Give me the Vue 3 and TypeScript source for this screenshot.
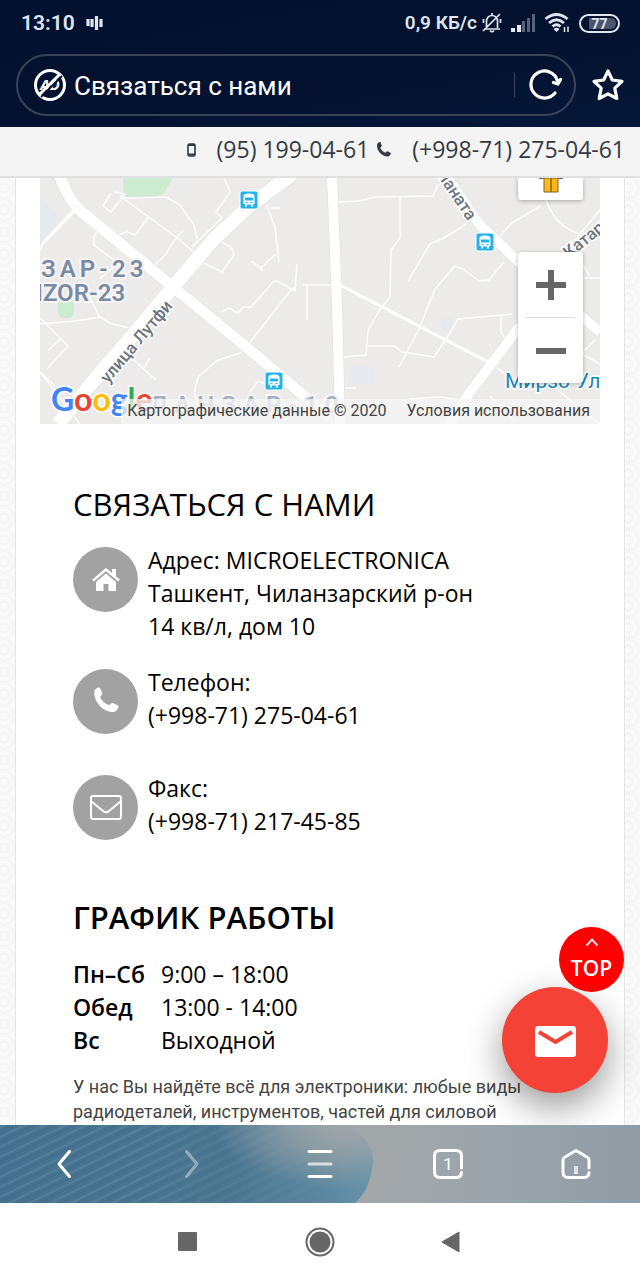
<script setup lang="ts">
import { ref } from 'vue'

interface Stop { x: number; y: number }
interface Hours { day: string; time: string }
interface Contact { icon: 'home' | 'phone' | 'mail'; lines: string[] }

const address = ref('Связаться с нами')

const stops: Stop[] = [
  { x: 240, y: 191 },
  { x: 476, y: 233 },
  { x: 265, y: 372 },
]

const contacts: Contact[] = [
  { icon: 'home', lines: ['Адрес: MICROELECTRONICA', 'Ташкент, Чиланзарский р-он', '14 кв/л, дом 10'] },
  { icon: 'phone', lines: ['Телефон:', '(+998-71) 275-04-61'] },
  { icon: 'mail', lines: ['Факс:', '(+998-71) 217-45-85'] },
]

const hours: Hours[] = [
  { day: 'Пн–Сб', time: '9:00 – 18:00' },
  { day: 'Обед', time: '13:00 - 14:00' },
  { day: 'Вс', time: 'Выходной' },
]

const lanes: string[] = [
  'M75 208 L43 243 L40 250',
  'M111 193 l-8 13 8 6 14-18 -11-2 M120 196 l60 44 20 18 M78 208',
  'M124 198 l42-1 14 8 14 20 3 14 M148 218 l-13 17 -8 -3 -15 5 -14-8 -4 8 0 8 24 18 -18 16 M183 231 l-10 11 -7 12 -19 18',
  'M192 247 l30-29 -6-6 14-20 -6-14 M202 262 l20 10 12-17 -2-7 -12-7',
  'M267 206 l8 21 4 35 M270 208 l10 0 M276 254 l-15 14 -10-7 M258 266 l5 5',
  'M222 312 l7-4 9 5 5-6 8 0 22-25 4-1 18 10 2-27 M296 286 l-6 5 -42 54 -8 8 -24 8 -18 16 -4 16 4 14',
  'M40 324 l35-3 25-4 10 6 30 8 M86 290 l14 28 M40 318 l28 28 -20 22 M48 350 l14-12',
  'M126 353 l30 27 M150 358 l-6 10 M40 372 l40 52 M40 372 l15 14 M250 392 l8-11 20 8',
  'M303 285 l37 0 M307 286 l0 34',
  'M338 202 l20-1 18-4 57-1 5-12 M400 197 l0 41 -9 12 -1 47 -10 12 -12 22 -2 24 -24 2 M367 346 l27 0 8 6 32 5 16-24 8-14 54-5',
  'M408 281 l22-37 12-5 20-12 4-4 M399 367 l20-38 16-40 20-23 8 3 16 12 10-1 15-18 M498 238 l14-15 28-17',
  'M501 314 l0 18 6 10 M545 196 q8 30 35 38 M600 210 l-30 36 20 30 M583 278 l17 0 M490 362 l30 24 M490 396 l25 25 M595 340 l-30 30 M340 388 l16 0',
  'M520 360 l80 64 M575 350 l25 14 M410 399 l30-2 26 4',
]
</script>

<template>
  <div class="phone">
    <header class="chrome">
      <div class="status">
        <span class="clock">13:10</span>
        <svg class="voice" width="18" height="16" viewBox="0 0 18 16" aria-hidden="true">
          <path d="M2 4v7M6 4v8M10.500 1v14M15 4v8" stroke="#dfe5f2" stroke-width="3.200" fill="none" />
        </svg>
        <span class="rate">0,9 КБ/с</span>
        <svg class="bell" width="22" height="22" viewBox="0 0 22 22" fill="none" stroke="#dfe5f2" stroke-width="1.700" aria-hidden="true">
          <path d="M3 17h16M5.500 16V9a5.500 5.500 0 0 1 11 0v7M9 18.500q2 2.500 4 0M11 1v3M2 19 19 2M2.500 7v4M19.500 7v4" />
        </svg>
        <svg class="signal" width="25" height="18" viewBox="0 0 25 18" aria-hidden="true">
          <path d="M0 14h4v4H0zM6 11h4v7H6z" fill="#e7ebf5" />
          <path d="M11 7h3v11h-3zM16 4h3v14h-3zM21 0h3v18h-3z" fill="#58627a" />
        </svg>
        <svg class="wifi" width="27" height="22" viewBox="0 0 27 22" fill="none" stroke="#dfe5f2" stroke-width="2.800" aria-hidden="true">
          <path d="M1.500 7q11-9 22 0M5 11q7.500-6.500 15 0M8.500 14.500q4-3.500 8 0" />
          <path d="m12.500 20-3-3q3-2.500 6 0z" fill="#dfe5f2" stroke="none" />
          <path d="M20.500 20v-5M24 14.500V20" stroke-width="1.500" />
        </svg>
        <span class="battery"><span class="charge">77</span></span>
      </div>
      <div class="toolbar">
        <div class="omnibox">
          <svg width="34" height="34" viewBox="0 0 34 34" aria-hidden="true">
            <circle cx="17" cy="17" r="14.500" fill="none" stroke="#fff" stroke-width="3" />
            <text x="17" y="22" text-anchor="middle" class="ad">AD</text>
            <path d="M8 29 29 8" stroke="#04122f" stroke-width="2" />
            <path d="M6 27 27 6" stroke="#fff" stroke-width="3" />
          </svg>
          <input v-model="address" class="address" type="text" aria-label="Адрес страницы">
          <button class="icon-btn reload" type="button" aria-label="Обновить">
            <svg width="36" height="36" viewBox="0 0 36 36" fill="none" stroke="#fff" stroke-width="3.200" stroke-linecap="round" stroke-linejoin="round">
              <path d="M29 26A13.500 13.500 0 1 1 31.500 14M27.500 15.500l4.500 1.500L34.500 12.500" />
            </svg>
          </button>
        </div>
        <button class="icon-btn" type="button" aria-label="В закладки">
          <svg width="34" height="34" viewBox="0 0 34 34" fill="none" stroke="#fff" stroke-width="3.200" stroke-linejoin="round">
            <path d="m17 3 4.300 9 9.700 1.300-7.200 6.900L25.800 30.500 17 25.800 8.200 30.500l2-10.300L3 13.300 12.700 12z" />
          </svg>
        </button>
      </div>
    </header>

    <div class="phones">
      <svg width="9" height="14" viewBox="0 0 9 14" aria-hidden="true">
        <rect x="1" y="1" width="7" height="12" rx="1.500" fill="none" stroke="#333a44" stroke-width="1.600" />
        <path d="M1 2h7M1 11.500h7" stroke="#333a44" stroke-width="2" />
      </svg>
      <a class="mobile" href="tel:951990461">(95) 199-04-61</a>
      <svg width="15" height="15" viewBox="0 0 26 26" aria-hidden="true">
        <path d="M2 4C3 1 7-1 8 1l2 5c.5 2-2 2.500-2.500 4.500C9 14 12 17 16 18.500c2-.5 2-3 4-2.500l5 2.500c2 1-.5 5.500-4 6.500C11 26 0 15 2 4z" fill="#333a44" />
      </svg>
      <a class="office" href="tel:+998712750461">(+998-71) 275-04-61</a>
    </div>

    <main class="site">
      <div class="sheet">
        <section class="map" aria-label="Карта">
          <svg class="tiles" viewBox="40 178 560 246" preserveAspectRatio="xMidYMid slice">
            <rect x="40" y="178" width="560" height="246" fill="#ecebe9" />
            <path d="M123 178h50l-9 15-8 4-32 0z" fill="#cdebd0" />
            <rect x="58" y="298" width="16" height="20" rx="6" fill="#cdebd0" />
            <path d="M40 196l20 22-20 28zM350 367h24v17h-24zM440 320l10-4 4 8-10 8z" fill="#e6e9ed" />
            <g fill="none" stroke="#fdfdfd" stroke-width="1.500" stroke-linejoin="round">
              <path v-for="lane in lanes" :key="lane" :d="lane" />
            </g>
            <g fill="none" stroke="#dededd">
              <path d="M292 174 248 207 213 240 173 287 133 335 100 373 58 424" stroke-width="15" />
              <path d="M59 174 Q68 200 82 212 L173 287 250 350 330 418" stroke-width="12" />
              <path d="M332 176 337 303 340 426M442 170 480 225 520 263 600 332M520 326 470 392 448 426" stroke-width="11" />
            </g>
            <g fill="none" stroke="#fff">
              <path d="M292 174 248 207 213 240 173 287 133 335 100 373 58 424" stroke-width="14" />
              <path d="M59 174 Q68 200 82 212 L173 287 250 350 330 418" stroke-width="11" />
              <path d="M332 176 337 303 340 426M442 170 480 225 520 263 600 332M520 326 470 392 448 426" stroke-width="10" />
              <path d="M340 285 488 362M77 208 43 243" stroke-width="3" />
            </g>
            <g class="district">
              <text x="41" y="277" class="spaced">ЗАР-23</text>
              <text x="36" y="301">IZOR-23</text>
              <text x="150" y="413" class="faded">ЛАНЗАР-10</text>
            </g>
            <g class="street">
              <text transform="translate(108 384) rotate(-50)">улица Лутфи</text>
              <text transform="translate(432 168) rotate(56)">апаната</text>
              <text transform="translate(569 259) rotate(-39)">Катартал</text>
            </g>
            <text x="505" y="388" class="metro">Мирзо-Улуг</text>
            <g v-for="stop in stops" :key="stop.x" :transform="`translate(${stop.x} ${stop.y})`">
              <rect width="18" height="18" rx="2" fill="#25b3ea" stroke="#fff" stroke-width="1" />
              <path d="M3.500 13V5q0-2.500 5.500-2.500T14.500 5v8H13v2.500h-2V13.500H7v2H5V13z" fill="#fff" />
              <path d="M5 6.500h8v3H5zM5.500 11h2v1.300h-2zM10.500 11h2v1.300h-2z" fill="#25b3ea" />
            </g>
            <text x="51" y="411" class="google"><tspan fill="#4285f4">G</tspan><tspan fill="#ea4335">o</tspan><tspan fill="#fbbc05">o</tspan><tspan fill="#4285f4">g</tspan><tspan fill="#34a853">l</tspan><tspan fill="#ea4335">e</tspan></text>
          </svg>
          <div class="map-controls">
            <button class="pegman" type="button" aria-label="Просмотр улиц">
              <svg width="26" height="16" viewBox="0 0 26 16">
                <path d="M1 0h5M20 0h5" stroke="#666" stroke-width="2" />
                <path d="M6 0h14v14H6z" fill="#fbb917" stroke="#81652a" />
                <path d="M13 0v14" stroke="#81652a" stroke-width="1.500" />
              </svg>
            </button>
            <div class="zoom">
              <button type="button" aria-label="Увеличить">
                <svg width="30" height="30" viewBox="0 0 30 30"><path d="M15 0v30M0 15h30" stroke="#666" stroke-width="6" /></svg>
              </button>
              <hr>
              <button type="button" aria-label="Уменьшить">
                <svg width="30" height="30" viewBox="0 0 30 30"><path d="M0 15h30" stroke="#666" stroke-width="6" /></svg>
              </button>
            </div>
          </div>
          <div class="attribution">
            <span>Картографические данные © 2020</span>
            <a href="#terms">Условия использования</a>
          </div>
        </section>

        <section class="info">
          <h2>СВЯЗАТЬСЯ С НАМИ</h2>
          <ul class="contacts">
            <li v-for="contact in contacts" :key="contact.icon">
              <span class="badge">
                <svg v-if="contact.icon === 'home'" width="28" height="24" viewBox="0 0 28 24" fill="#fff" aria-hidden="true">
                  <path d="M14 5.500 4 14V23h7.500v-7h5v7H24v-9z" />
                  <path d="M1 12.500 14 1.500l13 11" fill="none" stroke="#fff" stroke-width="2.400" />
                  <path d="M20 1h4v8l-4-3.500z" />
                </svg>
                <svg v-else-if="contact.icon === 'phone'" width="26" height="30" viewBox="0 0 26 30" aria-hidden="true">
                  <path d="M1.500 4C2.500 1 6-.500 7 1l2.300 5c.500 2-2.300 2.500-2 4.500C9 14 12 16.500 15.500 18c2 0 2.500-2.500 4.500-2l5 2.500c1.500 1.500-1 5.500-4 6.500C11 26 0 15 1.500 4z" fill="#fff" />
                </svg>
                <svg v-else width="32" height="25" viewBox="0 0 32 25" fill="none" stroke="#fff" stroke-width="2" aria-hidden="true">
                  <rect x="1" y="1" width="30" height="23" rx="2" />
                  <path d="M1.500 6.500 13 16q3 2.500 6 0L30.500 6.500" />
                </svg>
              </span>
              <p><span v-for="line in contact.lines" :key="line">{{ line }}</span></p>
            </li>
          </ul>

          <h2 class="strong">ГРАФИК РАБОТЫ</h2>
          <table class="hours">
            <tbody>
              <tr v-for="row in hours" :key="row.day">
                <th scope="row">{{ row.day }}</th>
                <td>{{ row.time }}</td>
              </tr>
            </tbody>
          </table>
          <p class="about">У нас Вы найдёте всё для электроники: любые виды радиодеталей, инструментов, частей для силовой</p>
        </section>
      </div>

      <button class="write" type="button" aria-label="Написать нам">
        <svg width="41" height="31" viewBox="0 0 41 31">
          <rect width="41" height="31" rx="3" fill="#fff" />
          <path d="m4 6 16.500 10L37 6" fill="none" stroke="#f44336" stroke-width="4" />
        </svg>
      </button>
      <a class="top" href="#top">
        <svg width="14" height="9" viewBox="0 0 14 9" fill="none" stroke="#ffdede" stroke-width="2"><path d="m1.500 7.500 5.500-6 5.500 6" /></svg>
        TOP
      </a>
    </main>

    <nav class="browser-bar" aria-label="Браузер">
      <svg class="scene" viewBox="0 0 640 78" preserveAspectRatio="none" aria-hidden="true">
        <defs>
          <linearGradient id="sea" x1="0" y1="0" x2="1" y2="0">
            <stop offset="0" stop-color="#467291" />
            <stop offset=".6" stop-color="#4c7690" />
            <stop offset="1" stop-color="#6492a8" />
          </linearGradient>
          <linearGradient id="sky" x1="0" y1="0" x2="1" y2="0">
            <stop offset="0" stop-color="#a3a7aa" />
            <stop offset=".6" stop-color="#a3a7aa" />
            <stop offset=".8" stop-color="#99a3aa" />
            <stop offset="1" stop-color="#929ca5" />
          </linearGradient>
          <radialGradient id="haze" gradientUnits="userSpaceOnUse" cx="345" cy="-10" r="130" gradientTransform="translate(0 5) scale(1 .5)">
            <stop offset="0" stop-color="#a1a6a8" />
            <stop offset=".4" stop-color="#a1a6a8" stop-opacity=".7" />
            <stop offset="1" stop-color="#a1a6a8" stop-opacity="0" />
          </radialGradient>
          <linearGradient id="fade" x1="0" y1="0" x2="1" y2="0">
            <stop offset=".4" stop-color="#fff" />
            <stop offset="1" stop-color="#fff" stop-opacity="0" />
          </linearGradient>
          <mask id="shore"><rect width="340" height="78" fill="url(#fade)" /></mask>
          <pattern id="waves" width="12" height="9" patternUnits="userSpaceOnUse" patternTransform="rotate(-26)">
            <path d="M0 2h12" stroke="#78a0b5" stroke-opacity=".25" stroke-width="2" />
            <path d="M0 6h12" stroke="#315f80" stroke-opacity=".18" stroke-width="2" />
          </pattern>
        </defs>
        <rect width="640" height="78" fill="url(#sky)" />
        <path d="M0 0H345Q375 15 373 38 370 65 355 78H0z" fill="url(#sea)" />
        <rect width="340" height="78" fill="url(#waves)" mask="url(#shore)" />
        <rect x="200" width="300" height="78" fill="url(#haze)" />
      </svg>
      <button type="button" aria-label="Назад">
        <svg width="32" height="32" viewBox="0 0 32 32"><path d="M21.500 3.500 11 16l10.500 12.500" /></svg>
      </button>
      <button type="button" class="dim" aria-label="Вперёд">
        <svg width="32" height="32" viewBox="0 0 32 32"><path d="M10.500 3.500 21 16 10.500 28.500" /></svg>
      </button>
      <button type="button" aria-label="Меню">
        <svg width="32" height="32" viewBox="0 0 32 32"><path d="M5 3.500h22M5 28.500h22" /><path d="M5 16h22" stroke-opacity=".7" /></svg>
      </button>
      <button type="button" aria-label="Вкладки">
        <svg width="32" height="32" viewBox="0 0 32 32">
          <path d="M29.500 20V8q0-5.500-5.500-5.500H8Q2.500 2.500 2.500 8v16q0 5.500 5.500 5.500h16q5 0 5.500-5" />
          <text x="16" y="22" text-anchor="middle">1</text>
        </svg>
      </button>
      <button type="button" aria-label="Домой">
        <svg width="32" height="32" viewBox="0 0 32 32">
          <path d="M29 20v-8q0-2-2-3L16 2.500 5 9q-2 1-2 3v12q0 5.500 5 5.500h16q5 0 5-5" />
          <path d="M16 18v8" stroke-opacity=".7" stroke-width="4" stroke-linecap="butt" />
        </svg>
      </button>
    </nav>

    <nav class="system" aria-label="Система">
      <button type="button" aria-label="Недавние"><svg width="30" height="30" viewBox="0 0 30 30"><rect x="5" y="5" width="19" height="19" rx="1" fill="#666" /></svg></button>
      <button type="button" aria-label="Главный экран"><svg width="30" height="30" viewBox="0 0 30 30"><circle cx="15" cy="15" r="13.500" fill="none" stroke="#666" stroke-width="2" /><circle cx="15" cy="15" r="10.500" fill="#666" /></svg></button>
      <button type="button" aria-label="Назад"><svg width="30" height="30" viewBox="0 0 30 30"><path d="M22 5v20L5 15z" fill="#666" stroke="#666" stroke-linejoin="round" /></svg></button>
    </nav>
  </div>
</template>

<style>
body {
  margin: 0;
  background: #fff;
}
</style>

<style scoped>
.phone {
  display: flex;
  flex-direction: column;
  height: 100vh;
  font-family: "Open Sans", "Noto Sans", sans-serif;
  color: #000;
}
svg {
  display: block;
  flex: none;
}
button {
  display: flex;
  align-items: center;
  justify-content: center;
  padding: 0;
  border: 0;
  background: none;
  font: inherit;
  cursor: pointer;
}
a {
  color: inherit;
  text-decoration: none;
}

.chrome {
  flex: none;
  background: linear-gradient(170deg, #02112f 0%, #04122f 60%, #06183b 100%);
  padding-bottom: 11px;
}
.status {
  display: flex;
  align-items: center;
  height: 46px;
  padding: 0 20px 0 21px;
  color: #dfe5f2;
  font: 600 19px/46px Roboto, sans-serif;
}
.clock {
  font-size: 21px;
}
.voice {
  margin-left: 11px;
}
.rate {
  margin-left: auto;
}
.bell {
  margin-left: 4px;
}
.signal {
  margin-left: 8px;
}
.wifi {
  margin-left: 8px;
}
.battery {
  box-sizing: border-box;
  width: 41px;
  height: 19px;
  margin-left: 8px;
  padding: 2px;
  border: 2px solid #dfe5f2;
  border-radius: 10px;
}
.charge {
  display: block;
  height: 11px;
  margin-left: 6px;
  padding-right: 6px;
  border-radius: 0 6px 6px 0;
  background: #4b556d;
  font-size: 14px;
  font-weight: 700;
  line-height: 12px;
  text-align: center;
}
.toolbar {
  display: flex;
  align-items: center;
  gap: 15px;
  padding: 8px 15px 0 16px;
}
.omnibox {
  display: flex;
  flex: 1;
  align-items: center;
  box-sizing: border-box;
  height: 62px;
  min-width: 0;
  padding: 0 12px 0 15px;
  border: 2px solid #394359;
  border-radius: 31px;
}
.ad {
  fill: #fff;
  font: italic 700 15px "Open Sans", sans-serif;
}
.address {
  flex: 1;
  min-width: 0;
  padding: 2px 0 0 7px;
  border: 0;
  outline: 0;
  background: none;
  color: #fff;
  font: 400 26px/32px Roboto, sans-serif;
}
.reload {
  padding-left: 11px;
  height: 24px;
  border-left: 1px solid #394359;
}

.phones {
  display: flex;
  flex: none;
  align-items: center;
  justify-content: flex-end;
  box-sizing: border-box;
  height: 51px;
  padding: 0 15px 4px 16px;
  border-bottom: 2px solid #e0e0e0;
  background: #f4f4f4;
  color: #333a44;
  font-size: 23px;
  line-height: 33px;
}
.mobile {
  margin: 0 7px 0 21px;
}
.office {
  margin-left: 21px;
}

.site {
  position: relative;
  flex: 1;
  min-height: 0;
  overflow: hidden;
  padding: 0 15px;
  background:
    repeating-radial-gradient(circle at 4px 10px, #fafafa 0 3px, transparent 3px 6px) 0 0 / 16px 22px,
    #f6f6f6;
}
.sheet {
  box-sizing: border-box;
  min-height: 100%;
  padding: 0 24px;
  border: solid #e6e6e6;
  border-width: 0 1px;
  background: #fff;
}
.map {
  position: relative;
  overflow: hidden;
}
.tiles {
  width: 100%;
  height: auto;
}
.tiles text {
  font-family: Roboto, sans-serif;
}
.district {
  fill: #7a8aa5;
  stroke: #f5f5f5;
  stroke-width: 4px;
  paint-order: stroke;
  font-size: 24px;
  font-weight: 600;
}
.spaced {
  letter-spacing: 4px;
}
.faded {
  fill: #a5afbf;
  letter-spacing: 7px;
}
.street {
  fill: #6b7580;
  stroke: #fff;
  stroke-width: 3px;
  paint-order: stroke;
  font-size: 17px;
  font-weight: 500;
}
.metro {
  fill: #1a87b9;
  stroke: #fff;
  stroke-width: 3px;
  paint-order: stroke;
  font-size: 21px;
}
.tiles .google {
  stroke: #fff;
  stroke-width: 3px;
  paint-order: stroke;
  font-family: Lato, sans-serif;
  font-size: 32px;
  font-weight: 700;
}
.map-controls {
  position: absolute;
  top: 0;
  right: 17px;
  bottom: 0;
  width: 65px;
}
.pegman {
  width: 100%;
  height: 22px;
  border-radius: 0 0 3px 3px;
  background: #fff;
  box-shadow: 0 1px 4px rgba(0, 0, 0, .3);
  align-items: flex-start;
}
.zoom {
  margin-top: 52px;
  border-radius: 3px;
  background: #fff;
  box-shadow: 0 1px 4px rgba(0, 0, 0, .3);
}
.zoom button {
  width: 100%;
  height: 65px;
}
.zoom hr {
  height: 1px;
  margin: 0 8px;
  border: 0;
  background: #ddd;
}
.attribution {
  position: absolute;
  right: 0;
  bottom: 0;
  display: flex;
  gap: 20px;
  padding: 0 10px 2px 6px;
  background: rgba(245, 245, 245, .75);
  color: #444;
  font: 400 16px/23px Roboto, sans-serif;
  white-space: nowrap;
}

.info {
  padding: 58px 33px 0;
}
h2 {
  margin: 0;
  font-size: 31px;
  font-weight: 400;
  line-height: 44px;
}
.strong {
  font-weight: 600;
}
.contacts {
  display: grid;
  gap: 23px;
  margin: 18px 0 40px;
  padding: 0;
  list-style: none;
}
.contacts li {
  display: flex;
  align-items: flex-start;
  gap: 10px;
  min-height: 83px;
}
.badge {
  display: flex;
  flex: none;
  align-items: center;
  justify-content: center;
  width: 65px;
  height: 65px;
  margin-top: 3px;
  border-radius: 50%;
  background: #a2a2a2;
}
.contacts p {
  display: grid;
  margin: 0;
  font-size: 23px;
  line-height: 33px;
}
.hours {
  margin: 19px 0 17px;
  border-collapse: collapse;
  font-size: 23px;
  line-height: 33px;
}
.hours th {
  width: 88px;
  padding: 0;
  font-weight: 600;
  text-align: left;
}
.hours td {
  padding: 0;
}
.about {
  margin: 0;
  color: #444;
  font: 400 18px/25px Roboto, sans-serif;
}

.write {
  position: absolute;
  right: 32px;
  bottom: 32px;
  width: 106px;
  height: 106px;
  padding-top: 2px;
  border-radius: 50%;
  background: #f44336;
  box-shadow: 0 14px 36px rgba(0, 0, 0, .4);
}
.top {
  position: absolute;
  right: 16px;
  bottom: 133px;
  display: flex;
  flex-direction: column;
  align-items: center;
  box-sizing: border-box;
  width: 65px;
  height: 65px;
  padding-top: 11px;
  border-radius: 50%;
  background: #f00;
  color: #fff;
  font-size: 21px;
  font-weight: 600;
  line-height: 42px;
}

.browser-bar {
  position: relative;
  display: grid;
  flex: none;
  grid-template-columns: repeat(5, 1fr);
  height: 78px;
}
.scene {
  position: absolute;
  inset: 0;
  width: 100%;
  height: 100%;
}
.browser-bar button {
  position: relative;
}
.browser-bar button svg {
  fill: none;
  stroke: #fff;
  stroke-width: 3px;
  stroke-linecap: round;
  stroke-linejoin: round;
}
.browser-bar .dim {
  opacity: .4;
}
.browser-bar text {
  fill: #fff;
  stroke: none;
  font: 400 17px Roboto, sans-serif;
}
.system {
  display: flex;
  flex: none;
  justify-content: center;
  gap: 102px;
  height: 77px;
  background: #fff;
}
</style>
